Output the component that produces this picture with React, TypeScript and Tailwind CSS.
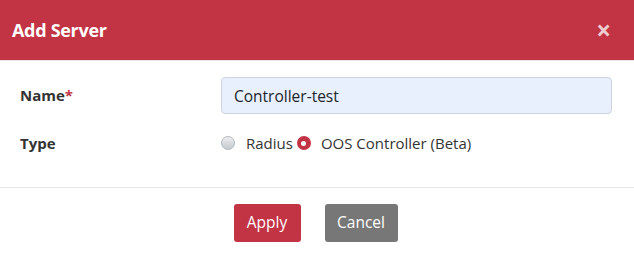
import React from 'react';

const font = { fontFamily: '"Open Sans", "Noto Sans", sans-serif' };

export default function App() {
  return (
    <div className="w-[634px] h-[258px] bg-white" style={font}>
      {/* header */}
      <div className="h-[61px] bg-[#c23344] border-b border-[#e5e5e5] flex items-center justify-between pl-3 pr-[23px]">
        <h4 className="text-white text-[18px] font-bold tracking-[-0.3px]">Add Server</h4>
        <button className="text-white/75 text-[26px] font-bold leading-none">×</button>
      </div>

      {/* body */}
      <div className="pt-[16px] px-5 pb-[32px] border-b border-[#e5e5e5]">
        <div className="flex items-center">
          <label className="w-[201px] text-[15px] font-bold text-[#333]">
            Name<span className="text-[#c23344]">*</span>
          </label>
          <input
            className="w-[391px] h-[37px] bg-[#e8f0fe] border border-[#ced4da] rounded-[4px] px-3 text-[15.5px] text-[#212529] outline-none"
            defaultValue="Controller-test"
          />
        </div>
        <div className="flex items-center mt-[17px] h-[24px]">
          <label className="w-[201px] text-[15px] font-bold text-[#333]">Type</label>
          <div className="flex items-center text-[15px] text-[#333]">
            <span className="w-[14px] h-[14px] rounded-full border border-[#b5b9bd] bg-gradient-to-b from-[#eceef0] to-[#c5c9cd]" />
            <span className="ml-[11px]">Radius</span>
            <span className="ml-[4px] w-[14px] h-[14px] rounded-full bg-[#c23344] flex items-center justify-center">
              <span className="w-[5px] h-[5px] rounded-full bg-white" />
            </span>
            <span className="ml-[10px]">OOS Controller (Beta)</span>
          </div>
        </div>
      </div>

      {/* footer */}
      <div className="flex justify-center gap-6 pt-4 pr-[3px]">
        <button className="h-[38px] w-[67px] bg-[#c23344] text-white text-[15.5px] rounded-[3px]">Apply</button>
        <button className="h-[38px] w-[73px] bg-[#777777] text-white text-[15.5px] rounded-[3px]">Cancel</button>
      </div>
    </div>
  );
}
